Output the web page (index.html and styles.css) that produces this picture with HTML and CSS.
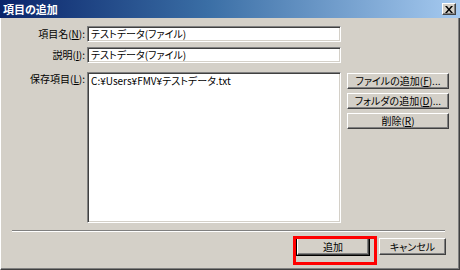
FILE: index.html
```html
<!DOCTYPE html>
<html lang="ja">
<head>
<meta charset="utf-8">
<title>項目の追加</title>
<link rel="stylesheet" href="styles.css">
</head>
<body>
<div class="window">
  <div class="titlebar">
    <span class="title">項目の追加</span>
    <button class="close" aria-label="閉じる">
      <svg width="8" height="7" viewBox="0 0 8 7"><path d="M0 0h2l2 2.5L6 0h2L5 3.5 8 7H6L4 4.5 2 7H0l3-3.5z" fill="#000"/></svg>
    </button>
  </div>
  <div class="body">
    <div class="form">
      <label class="lbl">項目名(<u>N</u>):</label>
      <div class="field">テストデータ(ファイル)</div>
      <span></span><span></span>

      <label class="lbl">説明(<u>I</u>):</label>
      <div class="field">テストデータ(ファイル)</div>
      <span></span><span></span>

      <label class="lbl lbl-top">保存項目(<u>L</u>):</label>
      <div class="field list">C:¥Users¥FMV¥テストデータ.txt</div>
      <span></span>
      <div class="side">
        <button class="btn">ファイルの追加(<u>F</u>)...</button>
        <button class="btn">フォルダの追加(<u>D</u>)...</button>
        <button class="btn">削除(<u>R</u>)</button>
      </div>
    </div>
    <div class="sep"></div>
    <div class="footer">
      <button class="btn default">追加</button>
      <button class="btn cancel">キャンセル</button>
    </div>
  </div>
  <div class="highlight"></div>
</div>
</body>
</html>
```
FILE: styles.css
```css
html, body {
  margin: 0;
  padding: 0;
  background: #d4d0c8;
}
body {
  width: 460px;
  height: 270px;
  overflow: hidden;
  font-family: "Noto Sans CJK JP", "DejaVu Sans", sans-serif;
  font-size: 10px;
  font-feature-settings: "palt";
  color: #000;
}
.window {
  position: relative;
  width: 460px;
  height: 270px;
  display: flex;
  flex-direction: column;
}
.titlebar {
  height: 18px;
  flex: none;
  display: flex;
  align-items: center;
  justify-content: space-between;
  padding: 0 4px 0 3px;
  background: linear-gradient(to right, #0a246a 0%, #3a6ea5 45%, #a6caf0 100%);
}
.title {
  color: #fff;
  font-weight: bold;
  font-size: 11px;
  line-height: 18px;
}
.close {
  width: 14px;
  height: 12px;
  padding: 0;
  margin: 0;
  box-sizing: border-box;
  background: #d4d0c8;
  border: 1px solid;
  border-color: #fff #404040 #404040 #fff;
  box-shadow: inset -1px -1px #808080;
  display: flex;
  align-items: center;
  justify-content: center;
}
.close svg { display: block; }
.body {
  flex: 1;
  border-left: 1px solid #fff;
  border-right: 1px solid #404040;
  border-bottom: 1px solid #404040;
  box-shadow: inset -1px -1px #808080;
  display: flex;
  flex-direction: column;
}
.form {
  display: grid;
  grid-template-columns: 86px 254px 6px 102px;
  grid-template-rows: 16px 16px 151px;
  row-gap: 5px;
  padding-top: 8px;
}
.lbl {
  text-align: right;
  padding-right: 2px;
  line-height: 16px;
  white-space: nowrap;
}
.lbl-top, .list, .side { margin-top: 4px; }
.lbl-top { line-height: 14px; }
.field {
  box-sizing: border-box;
  height: 16px;
  background: #fff;
  border: 1px solid;
  border-color: #808080 #fff #fff #808080;
  box-shadow: inset 1px 1px #404040, inset -1px -1px #d4d0c8;
  padding: 0 3px;
  line-height: 14px;
  white-space: nowrap;
}
.field.list {
  height: 151px;
  padding-top: 1px;
}
.side {
  display: flex;
  flex-direction: column;
  gap: 4px;
  padding-top: 1px;
}
.btn {
  box-sizing: border-box;
  height: 16px;
  width: 102px;
  padding: 0;
  margin: 0;
  font: inherit;
  color: #000;
  background: #d4d0c8;
  border: 1px solid;
  border-color: #fff #404040 #404040 #fff;
  box-shadow: inset -1px -1px #808080;
  line-height: 14px;
  text-align: center;
}
.sep {
  height: 0;
  margin: 11px 14px 0 11px;
  border-top: 1px solid #808080;
  border-bottom: 1px solid #fff;
}
.footer {
  display: flex;
  justify-content: flex-end;
  gap: 10px;
  padding: 6px 13px 0 0;
}
.btn.default {
  width: 72px;
  height: 17px;
  outline: 1px solid #000;
  outline-offset: 0;
  border-color: #fff #404040 #404040 #fff;
  box-shadow: inset -1px -1px #808080, 0 0 0 1px #000;
}
.btn.cancel {
  width: 67px;
  height: 17px;
}
.highlight {
  position: absolute;
  left: 293px;
  top: 236px;
  width: 84px;
  height: 29px;
  box-sizing: border-box;
  border: 3px solid #f00;
}
```
